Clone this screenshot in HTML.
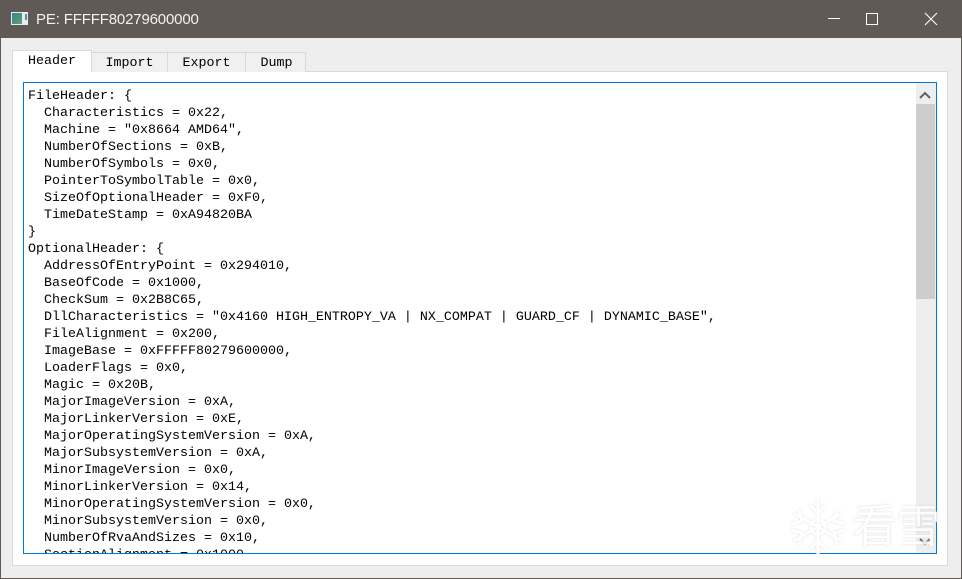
<!DOCTYPE html>
<html><head><meta charset="utf-8"><style>
html,body{margin:0;padding:0;background:#eee}
#w{position:relative;width:962px;height:579px;overflow:hidden;background:#eee;font-family:"Liberation Mono","Noto Serif CJK SC",monospace}
.a{position:absolute;box-sizing:border-box}
.tab{position:absolute;box-sizing:border-box;background:#f0f0f0;border:1px solid #d9d9d9;border-bottom:none;font-size:13.33px;text-align:center;color:#000;white-space:pre}
#txt{position:absolute;left:5px;top:6px;margin:0;font:13.33px/17px "Liberation Mono",monospace;color:#000;white-space:pre}
</style></head><body><div id="w">
<div class="a" style="left:0;top:0;width:962px;height:38px;background:#5f5a55"></div>
<div class="a" style="left:0;top:38px;width:1px;height:541px;background:#5f5a55"></div>
<div class="a" style="left:961px;top:38px;width:1px;height:541px;background:#5f5a55"></div>
<div class="a" style="left:0;top:578px;width:962px;height:1px;background:#5f5a55"></div>
<div class="a" style="left:11px;top:12px;width:17px;height:13px;background:#e8ecec"></div>
<div class="a" style="left:12px;top:13px;width:10px;height:11px;background:linear-gradient(135deg,#3d7f8f,#5aa86c)"></div>
<div class="a" style="left:25px;top:14px;width:2px;height:6px;background:#4f8f9f"></div>
<div class="a" style="left:36px;top:10px;font:15px/19px 'Liberation Sans',sans-serif;letter-spacing:-.16px;color:#f2f2f2;white-space:pre">PE: FFFFF80279600000</div>
<svg class="a" style="left:800px;top:0" width="162" height="38" fill="none" stroke="#fff" stroke-width="1">
<path d="M28 18.500H40"/>
<rect x="66.500" y="13.500" width="11" height="11"/>
<path d="M125 13L137 25M137 13L125 25" stroke-width="1.100"/>
</svg>
<div class="a" style="left:12px;top:71px;width:936px;height:495px;background:#fff;border:1px solid #d9d9d9"></div>
<div class="tab" style="left:91px;top:52px;width:77px;height:20px;line-height:21px">Import</div>
<div class="tab" style="left:167px;top:52px;width:79px;height:20px;line-height:21px">Export</div>
<div class="tab" style="left:245px;top:52px;width:61px;height:20px;line-height:21px;padding-left:2px">Dump</div>
<div class="tab" style="left:12px;top:50px;width:80px;height:22px;line-height:22px;background:#fff">Header</div>
<div class="a" style="left:23px;top:82px;width:914px;height:472px;background:#fff;overflow:hidden">
<pre id="txt">FileHeader: {
  Characteristics = 0x22,
  Machine = "0x8664 AMD64",
  NumberOfSections = 0xB,
  NumberOfSymbols = 0x0,
  PointerToSymbolTable = 0x0,
  SizeOfOptionalHeader = 0xF0,
  TimeDateStamp = 0xA94820BA
}
OptionalHeader: {
  AddressOfEntryPoint = 0x294010,
  BaseOfCode = 0x1000,
  CheckSum = 0x2B8C65,
  DllCharacteristics = "0x4160 HIGH_ENTROPY_VA | NX_COMPAT | GUARD_CF | DYNAMIC_BASE",
  FileAlignment = 0x200,
  ImageBase = 0xFFFFF80279600000,
  LoaderFlags = 0x0,
  Magic = 0x20B,
  MajorImageVersion = 0xA,
  MajorLinkerVersion = 0xE,
  MajorOperatingSystemVersion = 0xA,
  MajorSubsystemVersion = 0xA,
  MinorImageVersion = 0x0,
  MinorLinkerVersion = 0x14,
  MinorOperatingSystemVersion = 0x0,
  MinorSubsystemVersion = 0x0,
  NumberOfRvaAndSizes = 0x10,
  SectionAlignment = 0x1000,</pre>
<div class="a" style="left:893px;top:1px;width:20px;height:470px;background:#eee"></div>
<div class="a" style="left:893px;top:22px;width:19px;height:195px;background:#cdcdcd"></div>
<svg class="a" style="left:893px;top:1px" width="20" height="470" fill="none" stroke="#606060" stroke-width="2">
<path d="M4 15L9 10L14 15"/>
<path d="M4 456L9 461L14 456"/>
</svg>
<div class="a" style="left:0;top:0;width:914px;height:472px;border:1px solid #0078d7"></div>
</div>
<svg class="a" style="left:785px;top:497px;filter:drop-shadow(0 0 1px #ddd)" width="66" height="60" fill="none" stroke="#fff" stroke-width="3" opacity=".9">
<path d="M33 2V58M9 16L57 44M9 44L57 16"/>
<path d="M25 8L33 16L41 8M25 52L33 44L41 52M6 27L17 24L14 13M52 13L49 24L60 27M6 33L17 36L14 47M52 47L49 36L60 33"/>
<path d="M33 22L40 26V34L33 38L26 34V26Z"/>
</svg>
<div class="a" style="left:852px;top:495px;font:45px/56px 'Noto Sans CJK SC',sans-serif;color:#fff;opacity:.85;white-space:pre;letter-spacing:-1px;text-shadow:0 0 2px #ccc">看雪</div>
</div></body></html>
